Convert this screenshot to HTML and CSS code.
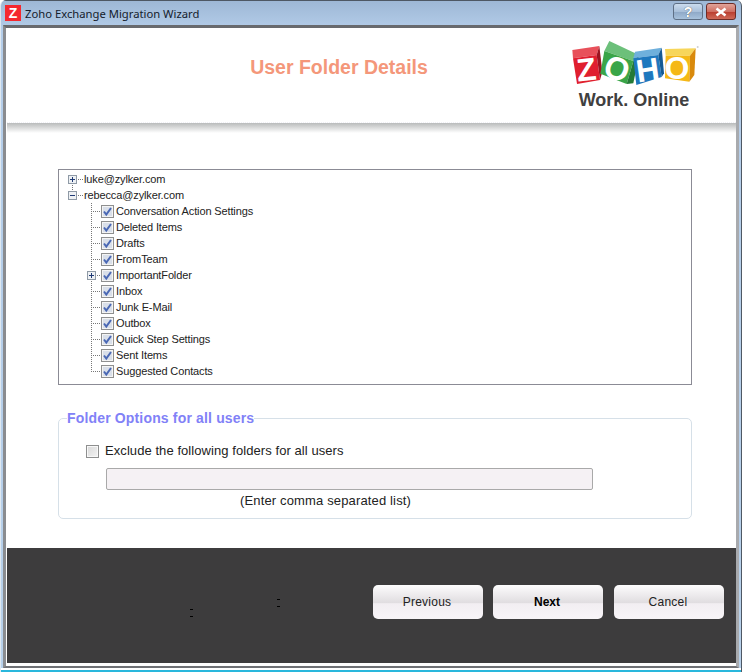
FILE: index.html
```html
<!DOCTYPE html>
<html>
<head>
	<meta charset="UTF-8">
	<title>Zoho Exchange Migration Wizard</title>
	<link rel="stylesheet" href="styles.css">
</head>
<body>
	<svg class="defs" width="0" height="0">
		<symbol id="tick" viewBox="0 0 13 13">
			<rect x="0.5" y="0.5" width="12" height="12" fill="#f4f4f4" stroke="#8e8f8f"/>
			<rect x="2" y="2" width="9" height="9" fill="#d9dfe9"/>
			<path d="M3 6.5 L5.3 9.5 L10 3" fill="none" stroke="#4a68b4" stroke-width="2"/>
		</symbol>
		<symbol id="plus" viewBox="0 0 9 9">
			<rect x="0.5" y="0.5" width="8" height="8" fill="#eef1f4" stroke="#8f9aa6"/>
			<path d="M2 4.5 H7 M4.5 2 V7" stroke="#1f3a75" fill="none"/>
		</symbol>
		<symbol id="minus" viewBox="0 0 9 9">
			<rect x="0.5" y="0.5" width="8" height="8" fill="#eef1f4" stroke="#8f9aa6"/>
			<path d="M2 4.5 H7" stroke="#1f3a75" fill="none"/>
		</symbol>
	</svg>

	<div class="window">
		<div class="titlebar">
			<span class="app-icon">Z</span>
			<span class="app-title">Zoho Exchange Migration Wizard</span>
			<span class="caption-btn help">?</span>
			<span class="caption-btn close">
				<svg width="14" height="10" viewBox="0 0 14 10"><path d="M2.5 1.5 L11.5 8.5 M11.5 1.5 L2.5 8.5" stroke="#fff" stroke-width="2.6"/></svg>
			</span>
		</div>

		<div class="client">
			<div class="header">
				<h1 class="page-title">User Folder Details</h1>
				<div class="logo">
					<svg width="140" height="60" viewBox="0 0 420 180">
						<polygon points="22,45 103,33 95,60 24,70" fill="#e8505a"/>
						<polygon points="24,70 95,60 105,135 36,147" fill="#e01f2f"/>
						<polygon points="103,33 112,110 105,135 95,60" fill="#9c1420"/>
						<text class="logo-letter" x="64" y="137" transform="rotate(-6 64 105)">Z</text>

						<polygon points="133,18 222,60 205,78 118,48" fill="#6cc07a"/>
						<polygon points="118,48 205,78 185,147 106,116" fill="#3aa548"/>
						<polygon points="222,60 205,145 185,147 205,78" fill="#247a36"/>
						<text class="logo-letter" x="156" y="134" transform="rotate(20 156 100)">O</text>

						<polygon points="210,50 290,38 280,60 205,70" fill="#6fb0dc"/>
						<polygon points="205,70 280,60 290,126 214,150" fill="#1f78be"/>
						<polygon points="290,38 297,115 290,126 280,60" fill="#155a94"/>
						<text class="logo-letter" x="248" y="138" transform="rotate(-8 248 105)">H</text>

						<polygon points="300,42 392,40 375,62 302,62" fill="#f7d65a"/>
						<polygon points="302,62 375,62 373,140 300,130" fill="#f5b816"/>
						<polygon points="392,40 388,120 373,140 375,62" fill="#d98a0c"/>
						<text class="logo-letter" x="336" y="132">O</text>
						<circle cx="398" cy="36" r="3" fill="#cfcfcf"/>
					</svg>
					<div class="logo-tag">Work. Online</div>
				</div>
			</div>
			<div class="header-shade"></div>

			<div class="main">
				<div class="tree">
					<div class="node root">
						<span class="branch top"><svg class="toggle" width="9" height="9"><use href="#plus"/></svg></span>
						<span class="name">luke@zylker.com</span>
					</div>
					<div class="node root">
						<span class="branch bottom"><svg class="toggle" width="9" height="9"><use href="#minus"/></svg></span>
						<span class="name">rebecca@zylker.com</span>
					</div>
					<div class="node child">
						<span class="branch"></span>
						<svg width="13" height="13"><use href="#tick"/></svg>
						<span class="name">Conversation Action Settings</span>
					</div>
					<div class="node child">
						<span class="branch"></span>
						<svg width="13" height="13"><use href="#tick"/></svg>
						<span class="name">Deleted Items</span>
					</div>
					<div class="node child">
						<span class="branch"></span>
						<svg width="13" height="13"><use href="#tick"/></svg>
						<span class="name">Drafts</span>
					</div>
					<div class="node child">
						<span class="branch"></span>
						<svg width="13" height="13"><use href="#tick"/></svg>
						<span class="name">FromTeam</span>
					</div>
					<div class="node child">
						<span class="branch"><svg class="toggle" width="9" height="9"><use href="#plus"/></svg></span>
						<svg width="13" height="13"><use href="#tick"/></svg>
						<span class="name">ImportantFolder</span>
					</div>
					<div class="node child">
						<span class="branch"></span>
						<svg width="13" height="13"><use href="#tick"/></svg>
						<span class="name">Inbox</span>
					</div>
					<div class="node child">
						<span class="branch"></span>
						<svg width="13" height="13"><use href="#tick"/></svg>
						<span class="name">Junk E-Mail</span>
					</div>
					<div class="node child">
						<span class="branch"></span>
						<svg width="13" height="13"><use href="#tick"/></svg>
						<span class="name">Outbox</span>
					</div>
					<div class="node child">
						<span class="branch"></span>
						<svg width="13" height="13"><use href="#tick"/></svg>
						<span class="name">Quick Step Settings</span>
					</div>
					<div class="node child">
						<span class="branch"></span>
						<svg width="13" height="13"><use href="#tick"/></svg>
						<span class="name">Sent Items</span>
					</div>
					<div class="node child">
						<span class="branch bottom"></span>
						<svg width="13" height="13"><use href="#tick"/></svg>
						<span class="name">Suggested Contacts</span>
					</div>
				</div>

				<fieldset class="options">
					<legend>Folder Options for all users</legend>
					<div class="exclude-row">
						<span class="checkbox"></span>
						<span>Exclude the following folders for all users</span>
					</div>
					<div class="exclude-input"></div>
					<div class="hint">(Enter comma separated list)</div>
				</fieldset>
			</div>

			<div class="footer">
				<div class="marks">
					<span class="colon low"></span>
					<span class="colon high"></span>
				</div>
				<button type="button" class="nav-btn">Previous</button>
				<button type="button" class="nav-btn default">Next</button>
				<button type="button" class="nav-btn">Cancel</button>
			</div>
			<div class="client-bottom"></div>
		</div>
		<div class="frame-bottom"></div>
	</div>
</body>
</html>
```

FILE: styles.css
```css
html, body {
	margin: 0;
	padding: 0;
	background: #fff;
}

.defs {
	display: block;
	height: 0;
}

.window {
	width: 742px;
	height: 672px;
	box-sizing: border-box;
	overflow: hidden;
	display: flex;
	flex-direction: column;
	border-radius: 6px 6px 0 0;
	border-left: 1px solid #dfe8f0;
	border-right: 1px solid #4e5864;
	background: linear-gradient(to bottom, #9db7d5 0, #b4cde9 30px, #b7d0ea 100%);
	font-family: "Liberation Sans", Arial, sans-serif;
	color: #111;
}

/* title bar */
.titlebar {
	height: 25px;
	flex: none;
	display: flex;
	align-items: center;
	padding: 0 5px 0 4px;
	border-top: 1px solid #4e5864;
	box-sizing: border-box;
}

.app-icon {
	width: 16px;
	height: 16px;
	background: #f5282e;
	color: #fff;
	font-weight: bold;
	font-size: 14px;
	line-height: 16px;
	text-align: center;
	margin-top: -1px;
}

.app-title {
	margin-left: 4px;
	font-family: "Noto Sans", sans-serif;
	font-size: 11.25px;
	flex: 1;
	color: #14202c;
}

.caption-btn {
	width: 30px;
	height: 17px;
	box-sizing: border-box;
	border-radius: 3px;
	display: flex;
	align-items: center;
	justify-content: center;
	margin-top: -3px;
}

.help {
	background: linear-gradient(to bottom, #cbdcee 0, #a9c0da 50%, #8da7c6 51%, #a8c2dc 100%);
	border: 1px solid #5f7086;
	color: #fff;
	font-weight: bold;
	font-size: 14px;
	text-shadow: 0 0 1px #333;
	margin-right: 3px;
}

.close {
	background: linear-gradient(to bottom, #e0a49a 0, #cf6f62 50%, #b83b2d 51%, #cf6a58 100%);
	border: 1px solid #6e2c26;
}

/* client area, with the grey frame lines round it */
.client {
	flex: none;
	width: 729px;
	height: 638px;
	margin: 0 2px;
	padding-left: 1px;
	border-top: 3px solid #686a6e;
	border-left: 3px solid #8a8c90;
	border-right: 3px solid #a8aaae;
	border-bottom: 2px solid #6f7175;
	background: #fff;
	display: flex;
	flex-direction: column;
}

.header {
	height: 95px;
	flex: none;
	display: flex;
	border-bottom: 1px dotted #f0f0f6;
	box-sizing: border-box;
}

.page-title {
	margin: 0;
	width: 664px;
	text-align: center;
	padding-top: 27px;
	font-size: 19.5px;
	line-height: 24px;
	font-weight: bold;
	color: #f4977a;
}

.logo {
	width: 0;
	margin-left: -106px;
	padding-top: 7px;
}

.logo svg {
	display: block;
}

.logo-letter {
	font-family: "Liberation Sans", Arial, sans-serif;
	font-weight: bold;
	font-size: 96px;
	fill: #fff;
	text-anchor: middle;
}

.logo-tag {
	width: 138px;
	text-align: center;
	font-size: 18px;
	line-height: 18px;
	font-weight: bold;
	color: #404040;
	margin-top: -4px;
}

.header-shade {
	height: 10px;
	flex: none;
	background: linear-gradient(to bottom, #b9bbbb 0, #dcdddd 50%, #fff 100%);
}

.main {
	flex: 1;
	padding: 36px 44px 0 51px;
}

/* tree */
.tree {
	height: 216px;
	box-sizing: border-box;
	border: 1px solid #8b8b95;
	padding-top: 1px;
	font-size: 11px;
	letter-spacing: -0.13px;
	color: #222;
}

.node {
	height: 16px;
	display: flex;
	align-items: center;
}

.branch {
	display: block;
	height: 16px;
	flex: none;
	position: relative;
	background-image:
		repeating-linear-gradient(to bottom, #777 0 1px, transparent 1px 2px),
		repeating-linear-gradient(to right, #777 0 1px, transparent 1px 2px);
	background-repeat: no-repeat;
}

.root .branch {
	margin-left: 9px;
	width: 16px;
	background-size: 1px 100%, 100% 1px;
	background-position: 4px 0, 4px 8px;
}

.root .branch.top {
	background-size: 1px 8px, 100% 1px;
	background-position: 4px 8px, 4px 8px;
}

.root .branch.bottom {
	background-size: 1px 8px, 100% 1px;
	background-position: 4px 0, 4px 8px;
}

.child .branch {
	margin-left: 28px;
	width: 14px;
	background-size: 1px 100%, 10px 1px;
	background-position: 4px 0, 4px 8px;
}

.child .branch.bottom {
	background-size: 1px 9px, 10px 1px;
}

.toggle {
	position: absolute;
	left: 0;
	top: 4px;
	display: block;
}

.name {
	margin-left: 2px;
	white-space: nowrap;
}

.root .name {
	margin-left: 0;
}

/* folder options */
.options {
	margin: 25px 0 0 0;
	padding: 0;
	height: 109px;
	box-sizing: border-box;
	border: 1px solid #d6e0e8;
	border-radius: 5px;
	min-width: 0;
}

.options legend {
	margin-left: 8px;
	padding: 0;
	font-size: 14px;
	line-height: 16px;
	font-weight: bold;
	letter-spacing: 0.16px;
	color: #8181f7;
}

.exclude-row {
	display: flex;
	align-items: center;
	margin: 17px 0 0 27px;
	font-size: 13px;
	line-height: 16px;
	letter-spacing: 0.07px;
	color: #222;
}

.checkbox {
	width: 13px;
	height: 13px;
	box-sizing: border-box;
	border: 1px solid #8e8f8f;
	background: linear-gradient(135deg, #d8d8d8 0, #f4f4f4 100%);
	box-shadow: inset 0 0 0 1px #f8f8f8;
	margin-right: 6px;
}

.exclude-input {
	width: 487px;
	height: 22px;
	box-sizing: border-box;
	margin: 9px 0 0 47px;
	background: #f5f1f4;
	border: 1px solid #a9a9a9;
	border-radius: 2px;
}

.hint {
	width: 487px;
	margin: 3px 0 0 23px;
	font-size: 13px;
	line-height: 16px;
	letter-spacing: 0.15px;
	text-align: center;
	color: #222;
}

/* footer */
.footer {
	height: 115px;
	flex: none;
	display: flex;
	align-items: flex-start;
	padding: 37px 12px 0 0;
	box-sizing: border-box;
	gap: 10px;
	background-color: #3d3c3d;
	background-image: radial-gradient(#454545 0.6px, transparent 0.7px);
	background-size: 2px 2px;
}

.marks {
	flex: 1;
	display: flex;
	padding-left: 183px;
	gap: 84px;
}

.colon {
	display: block;
	width: 3px;
	height: 8px;
	box-sizing: border-box;
	border-top: 1px solid #000;
	border-bottom: 1px solid #000;
}

.colon.low {
	margin-top: 24px;
}

.colon.high {
	margin-top: 14px;
}

.nav-btn {
	width: 110px;
	height: 34px;
	padding: 0 2px 0 0;
	border: none;
	border-radius: 5px;
	font-family: "Liberation Sans", Arial, sans-serif;
	font-size: 12px;
	letter-spacing: 0.25px;
	color: #222;
	background: linear-gradient(to bottom, #fdfcfd 0, #e0dde0 52%, #f2eef2 55%, #f8f5f8 100%);
}

.nav-btn.default {
	font-weight: bold;
	letter-spacing: 0;
	color: #000;
	margin-right: 1px;
}

.client-bottom {
	height: 3px;
	flex: none;
	background: #fff;
}

.frame-bottom {
	flex: 1;
	background: #fff;
	border-bottom: 2px solid #29b7dc;
}
```
